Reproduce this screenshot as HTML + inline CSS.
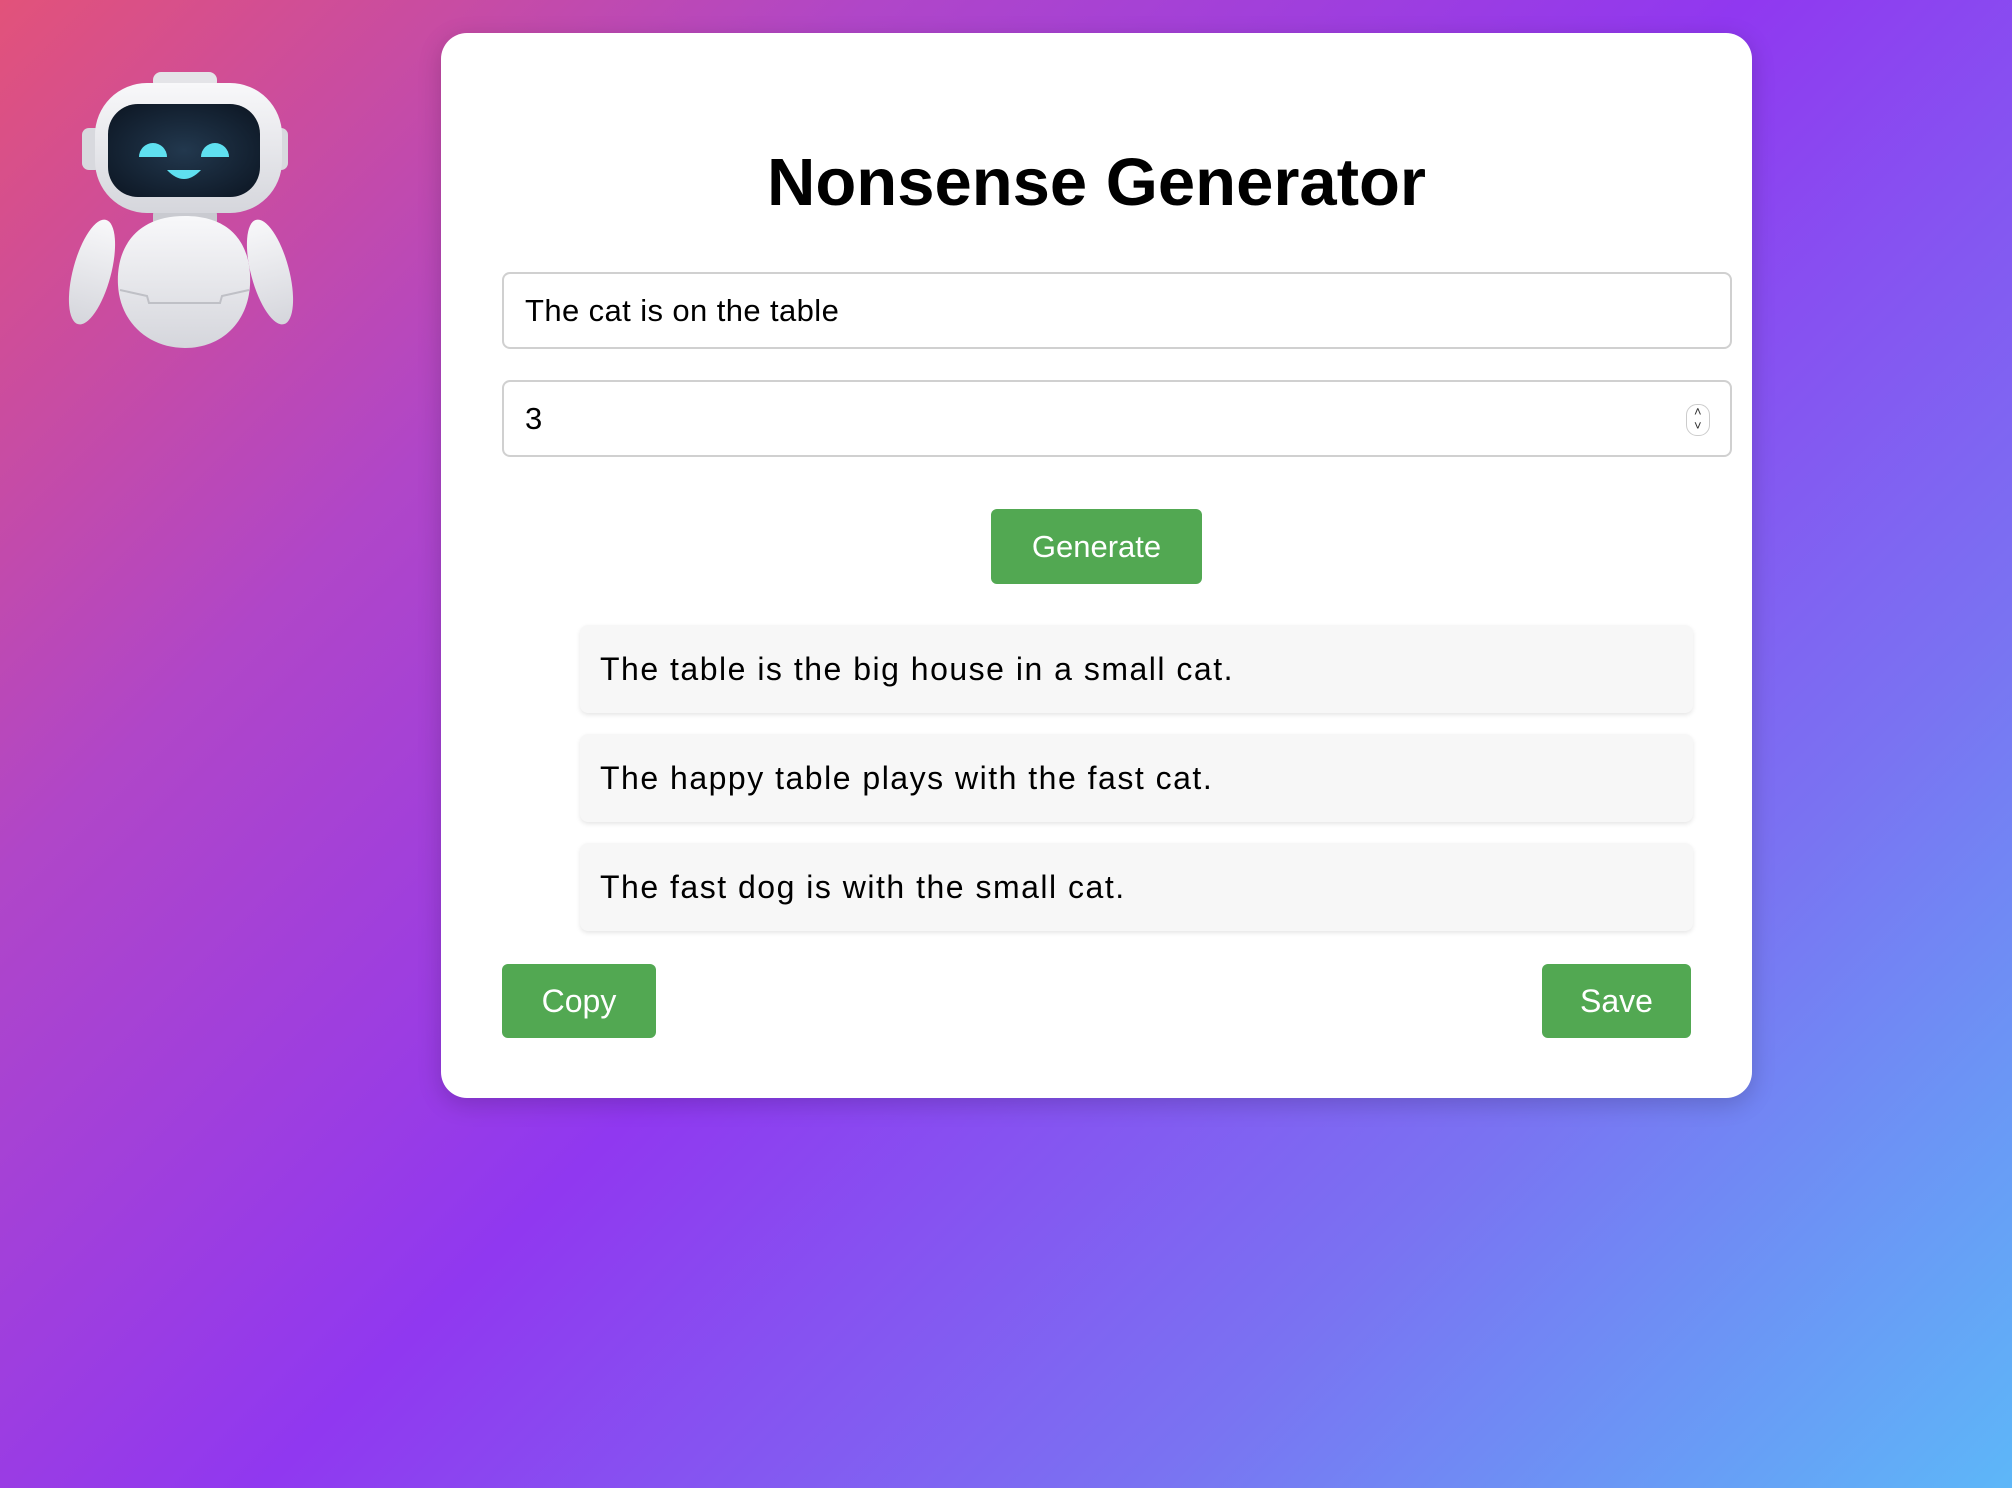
<!DOCTYPE html>
<html><head><meta charset="utf-8"><style>
html,body{margin:0;padding:0}
body{width:2012px;height:1488px;position:relative;overflow:hidden;font-family:"Liberation Sans",sans-serif;background:linear-gradient(135deg,#e2527a 0%,#b046c8 25%,#9038f0 50%,#7a72f2 75%,#5db7f8 100%)}
.card{position:absolute;left:441px;top:33px;width:1311px;height:1065px;background:#fff;border-radius:26px;box-shadow:0 6px 24px rgba(0,0,0,.18)}
h1{position:absolute;left:0;right:0;top:142px;margin:0;text-align:center;font-size:67px;font-weight:bold;color:#000;line-height:80px;padding-left:0}
.inp{position:absolute;left:61px;width:1230px;height:77px;border:2px solid #d0d0d0;border-radius:8px;box-sizing:border-box;font-size:31px;line-height:73px;padding-left:21px;color:#000;letter-spacing:.4px}
.btn{position:absolute;background:#52a852;color:#fff;border-radius:6px;text-align:center;font-size:32px}
.res{position:absolute;left:139px;width:1113px;height:88px;background:#f7f7f7;border-radius:8px;box-shadow:0 2px 5px rgba(0,0,0,.1);font-size:32px;line-height:88px;padding-left:20px;box-sizing:border-box;color:#000;letter-spacing:1.5px}
.spin{position:absolute;right:20px;top:22px;width:22px;height:30px;border:1px solid #ccc;border-radius:11px;font-size:13px;line-height:14px;text-align:center;color:#333}
</style></head><body>
<svg style="position:absolute;left:0;top:0" width="360" height="400" viewBox="0 0 360 400">
<defs><linearGradient id="w" x1="0" y1="0" x2="0" y2="1"><stop offset="0" stop-color="#f8f8fa"/><stop offset="1" stop-color="#d5d6dc"/></linearGradient>
<radialGradient id="v" cx=".5" cy=".5" r=".6"><stop offset="0" stop-color="#22384e"/><stop offset="1" stop-color="#0f1a28"/></radialGradient></defs>
<ellipse cx="92" cy="272" rx="19" ry="54" transform="rotate(15 92 272)" fill="url(#w)"/>
<ellipse cx="270" cy="272" rx="19" ry="54" transform="rotate(-15 270 272)" fill="url(#w)"/>
<rect x="153" y="205" width="64" height="26" rx="10" fill="#c9cad0"/>
<path d="M185 216 C236 216 252 250 250 285 C248 322 222 348 185 348 C148 348 120 322 118 285 C116 250 134 216 185 216Z" fill="url(#w)"/>
<path d="M120 290 L147 296 L149 303 L220 303 L222 296 L249 290" fill="none" stroke="#bfc0c6" stroke-width="2"/>
<rect x="153" y="72" width="64" height="18" rx="8" fill="#e4e4e8"/>
<rect x="82" y="128" width="20" height="42" rx="7" fill="#d8d9de"/>
<rect x="268" y="128" width="20" height="42" rx="7" fill="#d8d9de"/>
<rect x="95" y="83" width="187" height="130" rx="52" fill="url(#w)"/>
<rect x="108" y="104" width="152" height="93" rx="30" fill="url(#v)"/>
<path d="M139 157 A14 14 0 0 1 167 157 Z" fill="#5fe0f0"/>
<path d="M201 157 A14 14 0 0 1 229 157 Z" fill="#5fe0f0"/>
<path d="M167 170 Q184 188 201 170 Z" fill="#5fe0f0"/>
</svg>
<div class="card">
<h1 style="top:110px">Nonsense Generator</h1>
<div class="inp" style="top:239px">The cat is on the table</div>
<div class="inp" style="top:347px">3<div class="spin">˄<br>˅</div></div>
<div class="btn" style="left:550px;top:476px;width:211px;height:75px;line-height:75px;font-size:31px">Generate</div>
<div class="res" style="top:592px">The table is the big house in a small cat.</div>
<div class="res" style="top:701px">The happy table plays with the fast cat.</div>
<div class="res" style="top:810px">The fast dog is with the small cat.</div>
<div class="btn" style="left:61px;top:931px;width:154px;height:74px;line-height:74px">Copy</div>
<div class="btn" style="left:1101px;top:931px;width:149px;height:74px;line-height:74px">Save</div>
</div>
</body></html>
